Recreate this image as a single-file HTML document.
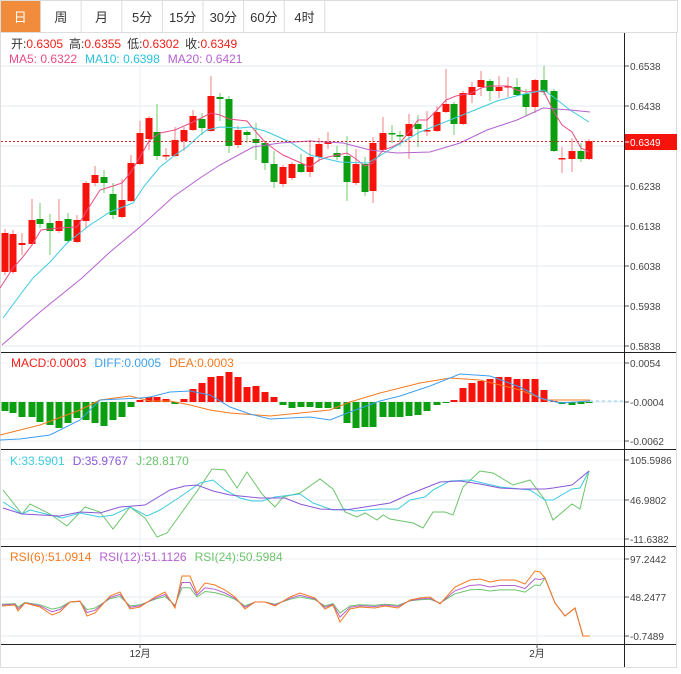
<!DOCTYPE html>
<html><head><meta charset="utf-8">
<style>
html,body{margin:0;padding:0;background:#fff;}
body{width:681px;height:674px;overflow:hidden;font-family:"Liberation Sans","Noto Sans CJK SC",sans-serif;}
svg{display:block}
</style></head>
<body>
<svg id="s" width="681" height="674" xmlns="http://www.w3.org/2000/svg" font-family="Liberation Sans, Noto Sans CJK SC, sans-serif"></svg>
<script>
var s=document.getElementById('s');var h='';
function L(x1,y1,x2,y2,c,w,extra){h+='<line x1="'+x1+'" y1="'+y1+'" x2="'+x2+'" y2="'+y2+'" stroke="'+c+'" stroke-width="'+(w||1)+'" '+(extra||'')+'/>';}
function R(x,y,w,hh,c,extra){h+='<rect x="'+x+'" y="'+y+'" width="'+w+'" height="'+hh+'" fill="'+c+'" '+(extra||'')+'/>';}
function T(x,y,t,c,sz,anchor){h+='<text x="'+x+'" y="'+y+'" fill="'+c+'" font-size="'+(sz||12)+'"'+(anchor?' text-anchor="'+anchor+'"':'')+'>'+t+'</text>';}
function P(pts,c,w){h+='<polyline fill="none" stroke="'+c+'" stroke-width="'+(w||1)+'" points="'+pts.map(function(p){return p[0]+','+p[1]}).join(' ')+'"/>';}
// tabs
var tabs=['日','周','月','5分','15分','30分','60分','4时'];
R(0.5,0.5,677,32,'#fff','stroke="#ddd"');
for(var i=0;i<tabs.length;i++){var x=i*40.6;
 if(i==0)R(1,1,40,31,'#f18c3c');
 L(x+40.6,1,x+40.6,32,'#ddd');
 T(x+20.3,22,tabs[i],i==0?'#fff':'#333',13,'middle');}
// chart frame
R(0.5,32.5,676,635,'none','stroke="#ddd"');
// grid
var gy=[66,106,146,186,226,266,306,346];
gy.forEach(function(y){L(1,y,624,y,'#e4ebf2');});
[402].forEach(function(y){L(1,y,624,y,'#e4ebf2');});
[500].forEach(function(y){L(1,y,624,y,'#e4ebf2');});
[597,636].forEach(function(y){L(1,y,624,y,'#e4ebf2');});
[363,441,460,539,559].forEach(function(y){L(1,y,624,y,'#eef2f6');});
L(140,33,140,644,'#e8eef4');L(537,33,537,644,'#e8eef4');
// candles
var C=[[5,233,272,229,275,1],[13,234,272,230,274,1],[22,243,245,233,255,1],[32,220,244,199,245,1],[40,219,224,203,228,0],[50,223,231,214,255,0],[59,221,231,199,233,1],[68,219,241,213,243,0],[77,220,242,215,243,1],[86,183,221,181,228,1],[95,175,183,166,186,1],[104,177,183,170,193,0],[113,194,215,183,219,0],[122,200,217,179,218,1],[131,163,201,155,202,1],[140,133,164,121,165,1],[149,118,139,116,150,1],[157,132,156,104,160,0],[166,155,156,148,160,1],[175,140,156,127,157,1],[184,130,141,127,151,1],[193,116,130,110,131,1],[202,119,128,113,135,0],[211,96,131,76,132,1],[220,97,99,93,121,0],[229,99,146,96,153,0],[238,130,145,126,148,1],[247,132,135,130,143,0],[256,139,143,123,160,0],[265,143,163,142,170,0],[274,164,182,151,188,0],[283,167,184,165,187,1],[292,164,178,162,180,1],[301,164,172,154,173,0],[310,157,172,140,177,1],[319,144,157,138,162,1],[328,142,144,132,149,1],[337,153,157,146,160,0],[347,156,182,136,201,0],[356,164,183,149,185,1],[365,164,192,157,196,0],[373,143,191,137,203,1],[383,133,150,117,151,1],[392,133,134,125,143,0],[400,135,136,131,146,0],[409,124,136,114,159,1],[418,124,129,115,147,0],[427,130,131,111,136,1],[437,112,131,106,132,1],[446,104,112,69,113,1],[454,104,124,102,135,0],[463,93,124,91,125,1],[472,87,95,82,103,1],[481,80,87,71,96,1],[490,81,91,79,101,0],[499,87,91,76,98,1],[508,86,87,77,97,1],[517,87,95,78,96,0],[526,94,107,89,116,0],[535,80,107,79,113,1],[544,80,92,66,95,0],[554,91,151,89,152,0],[562,158,159.5,147,173,1],[572,151,159,138,172,1],[581,151,159,143,162,0],[589,141,159,139,160,1]];
C.forEach(function(c){var col=c[5]?'#f5130b':'#0a9e10',wc=c[5]?'#f08080':'#6cce6c';
 L(c[0],c[3],c[0],c[4],wc);R(c[0]-3.5,c[1],7,Math.max(1.5,c[2]-c[1]),col);});
// MA lines
P([[0,288],[13,268],[22,258],[32,245],[41,230],[59,228],[77,227],[86,212],[100,190],[113,186],[122,183],[131,172],[140,157],[149,141],[160,133],[175,130],[193,122],[211,113],[220,115],[229,119],[247,121],[256,132],[265,142],[274,149],[283,155],[301,163],[310,167],[319,160],[328,157],[347,153],[356,159],[365,166],[373,163],[383,150],[392,147],[400,143],[409,132],[418,120],[427,120],[437,110],[446,100],[456,96],[472,93],[481,88],[490,86],[508,86],[517,90],[526,92],[535,91],[544,92],[554,112],[562,125],[572,132],[581,148],[589,152]],'#ea4c85');
P([[3,318],[20,295],[33,278],[50,262],[67,243],[90,225],[110,212],[133,203],[145,185],[160,167],[175,155],[187,147],[200,135],[207,130],[220,127],[240,128],[250,127],[265,131],[290,142],[310,155],[340,162],[368,163],[386,152],[396,146],[420,132],[440,124],[470,112],[497,101],[520,95],[535,92],[544,90],[556,99],[570,110],[589,122]],'#3ccbe0');
P([[2,345],[40,312],[82,278],[110,252],[140,227],[173,197],[200,178],[220,165],[253,147],[280,143],[310,141],[343,143],[370,150],[397,153],[430,152],[460,143],[487,130],[517,120],[543,108],[570,110],[590,112]],'#b461d0');
L(1,141.5,624,141.5,'#e02020',1,'stroke-dasharray="2,2"');
// headers
h+='<text y="48" font-size="12"><tspan x="11" fill="#333">开:</tspan><tspan fill="#f5201a">0.6305</tspan><tspan fill="#333" dx="6">高:</tspan><tspan fill="#f5201a">0.6355</tspan><tspan fill="#333" dx="6">低:</tspan><tspan fill="#f5201a">0.6302</tspan><tspan fill="#333" dx="6">收:</tspan><tspan fill="#f5201a">0.6349</tspan></text>';
h+='<text y="63" font-size="12"><tspan x="9" fill="#ea4c85">MA5: 0.6322</tspan><tspan dx="8" fill="#29c2dc">MA10: 0.6398</tspan><tspan dx="8" fill="#b461d0">MA20: 0.6421</tspan></text>';
// MACD
var mb=[411,413,417,417,422,425,428,423,418,420,423,426,420,417,407,400,397,397,399,404,399,389,383,377,376,372,377,387,386,392,397,405,408,407,407,408,408,409,423,428,427,427,417,417,417,416,415,411,405,403,400,388,383,381,379,377,377,379,379,379,390,401,404,405,404,403];
mb.forEach(function(y,i){var x=C[i][0];var up=y<402;R(x-3.5,Math.min(y,402),7,Math.max(1,Math.abs(y-402)),up?'#f5130b':'#0a9e10');});
P([[0,435],[40,425],[80,410],[100,400],[130,396],[150,401],[170,401],[190,405],[210,410],[230,413],[270,416],[300,413],[330,410],[350,402],[380,393],[420,383],[450,378],[480,380],[520,390],[545,400],[590,400]],'#f57a1e');
P([[0,440],[20,439],[50,435],[80,420],[100,400],[120,399],[140,398],[150,397],[170,392],[190,391],[210,395],[230,407],[250,414],[270,419],[290,418],[310,417],[330,420],[350,412],[380,401],[400,396],[430,386],[460,374],[490,376],[520,387],[540,398],[560,403],[590,401]],'#3e9ff0');
L(590,401,624,401,'#8ecff0',1,'stroke-dasharray="3,3"');
h+='<text y="367" font-size="12"><tspan x="11" fill="#f5201a">MACD:0.0003</tspan><tspan dx="8" fill="#3e9ff0">DIFF:0.0005</tspan><tspan dx="8" fill="#f57a1e">DEA:0.0003</tspan></text>';
// KDJ
P([[3,490],[22,514],[30,504],[50,514],[67,526],[85,507],[100,512],[113,529],[130,507],[145,518],[157,537],[167,533],[200,487],[212,469],[225,470],[237,488],[247,472],[262,494],[275,507],[283,497],[300,493],[320,479],[333,489],[345,512],[357,517],[365,513],[372,517],[377,520],[383,515],[390,519],[413,523],[423,528],[433,512],[445,512],[453,515],[463,487],[480,471],[493,473],[513,485],[530,480],[545,500],[553,520],[572,504],[580,509],[589,471]],'#6cc46c');
P([[3,502],[22,514],[30,510],[62,518],[80,513],[100,517],[113,515],[130,507],[147,516],[160,510],[180,497],[200,483],[213,480],[225,490],[240,498],[252,501],[262,501],[275,497],[300,494],[313,503],[333,510],[345,509],[355,511],[380,509],[398,509],[410,500],[425,497],[433,490],[450,481],[470,480],[500,487],[530,490],[545,500],[553,500],[572,489],[580,488],[589,471]],'#3ccbe0');
P([[3,508],[22,514],[60,516],[80,512],[100,513],[120,507],[145,505],[170,490],[185,486],[197,485],[213,491],[230,495],[260,498],[285,498],[300,504],[320,509],[345,510],[365,507],[390,503],[410,494],[430,486],[440,482],[460,481],[480,484],[500,488],[520,489],[545,489],[553,488],[572,485],[589,471]],'#8a58d8');
h+='<text y="465" font-size="12"><tspan x="10" fill="#3ccbe0">K:33.5901</tspan><tspan dx="8" fill="#8a58d8">D:35.9767</tspan><tspan dx="8" fill="#6cc46c">J:28.8170</tspan></text>';
// RSI
var r6=[[2,606],[15,605],[18,611],[25,603],[40,607],[52,615],[60,612],[70,602],[80,601],[87,616],[95,613],[110,596],[120,592],[130,609],[140,607],[155,597],[165,592],[175,608],[182,576],[190,576],[197,593],[205,583],[215,585],[225,590],[235,597],[245,609],[255,602],[265,602],[275,606],[290,597],[300,593],[315,598],[325,609],[333,605],[340,622],[350,609],[360,607],[375,608],[385,606],[398,608],[410,600],[420,598],[430,597],[440,604],[455,587],[470,580],[480,579],[490,582],[500,580],[515,580],[525,584],[535,571],[540,572],[545,578],[555,603],[565,616],[575,608],[583,636],[590,636]];
function damp(k){return r6.map(function(p){var f=p[0]>=545?1:k;return [p[0],(602+(p[1]-602)*f).toFixed(1)];});}
P(damp(0.55),'#6cc46c');P(damp(0.75),'#b461d0');P(r6,'#f57a1e');
h+='<text y="561" font-size="12"><tspan x="10" fill="#f57a1e">RSI(6):51.0914</tspan><tspan dx="8" fill="#b461d0">RSI(12):51.1126</tspan><tspan dx="8" fill="#6cc46c">RSI(24):50.5984</tspan></text>';
// dividers
[352,449,546,644].forEach(function(y){L(1,y+0.5,676,y+0.5,'#222');});
L(624.5,33,624.5,667,'#222');
// axis labels
var ax=[[66,'0.6538'],[106,'0.6438'],[186,'0.6238'],[226,'0.6138'],[266,'0.6038'],[306,'0.5938'],[346,'0.5838'],[363,'0.0054'],[402,'-0.0004'],[441,'-0.0062'],[460,'105.5986'],[500,'46.9802'],[539,'-11.6382'],[559,'97.2442'],[597,'48.2477'],[636,'-0.7489']];
ax.forEach(function(a){L(625,a[0],629,a[0],'#555');T(630,a[0]+4,a[1],'#444',10);});
R(625,134,52,16,'#f5130b');L(625,142,629,142,'#fff');T(630,146,'0.6349','#fff',10);
// x labels
L(140,644,140,648,'#555');L(537,644,537,648,'#555');
T(140,657,'12月','#333',10,'middle');T(537,657,'2月','#333',10,'middle');
s.innerHTML=h;
</script>
</body></html>
